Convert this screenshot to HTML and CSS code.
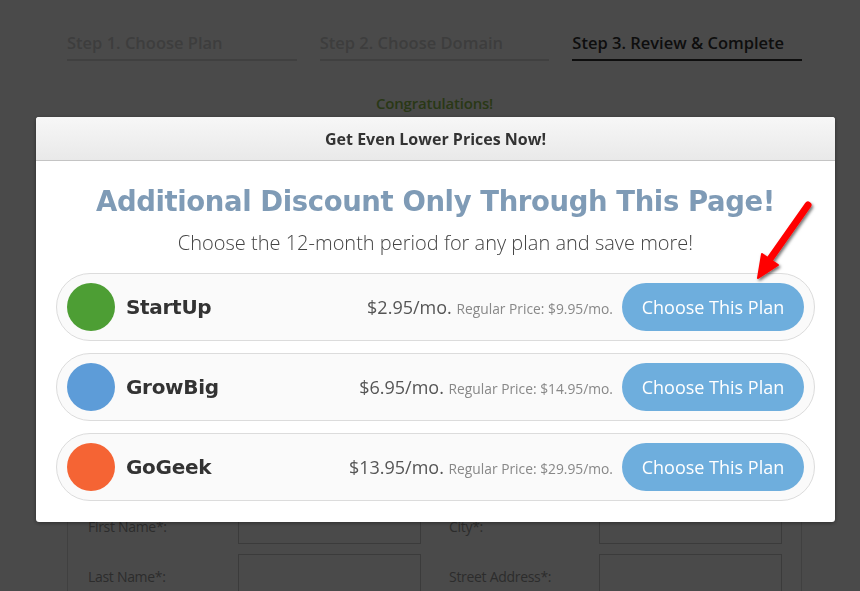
FILE: index.html
```html
<!DOCTYPE html>
<html lang="en">
<head>
    <meta charset="UTF-8">
    <meta name="viewport" content="width=device-width, initial-scale=1.0">
    <title>Review &amp; Complete</title>
    <link rel="stylesheet" href="styles.css">
</head>
<body>
    <div class="page">
        <div class="steps">
            <div class="step">Step 1. Choose Plan</div>
            <div class="step">Step 2. Choose Domain</div>
            <div class="step active">Step 3. Review &amp; Complete</div>
        </div>
        <p class="congrats">Congratulations!</p>
        <div class="account">
            <div class="field">
                <label>First Name*:</label>
                <input type="text">
            </div>
            <div class="field">
                <label>City*:</label>
                <input type="text">
            </div>
            <div class="field">
                <label>Last Name*:</label>
                <input type="text">
            </div>
            <div class="field">
                <label>Street Address*:</label>
                <input type="text">
            </div>
        </div>
    </div>

    <div class="overlay"></div>

    <div class="modal">
        <div class="modal-head">Get Even Lower Prices Now!</div>
        <div class="modal-body">
            <h2>Additional Discount Only Through This Page!</h2>
            <p class="sub">Choose the 12-month period for any plan and save more!</p>

            <div class="plan">
                <span class="dot green"></span>
                <span class="name">StartUp</span>
                <span class="price">$2.95/mo. <small>Regular Price: $9.95/mo.</small></span>
                <button>Choose This Plan</button>
            </div>
            <div class="plan">
                <span class="dot blue"></span>
                <span class="name">GrowBig</span>
                <span class="price">$6.95/mo. <small>Regular Price: $14.95/mo.</small></span>
                <button>Choose This Plan</button>
            </div>
            <div class="plan">
                <span class="dot orange"></span>
                <span class="name">GoGeek</span>
                <span class="price">$13.95/mo. <small>Regular Price: $29.95/mo.</small></span>
                <button>Choose This Plan</button>
            </div>
        </div>
        <!-- red pointer drawn over the first button -->
        <svg class="arrow" width="70" height="90" viewBox="0 0 70 90">
            <defs>
                <filter id="sh" x="-30%" y="-30%" width="160%" height="160%">
                    <feDropShadow dx="1.5" dy="2" stdDeviation="1.5" flood-color="#000" flood-opacity="0.55"/>
                </filter>
            </defs>
            <g filter="url(#sh)" fill="#f00" stroke="#f00">
                <line x1="58" y1="10" x2="20" y2="64" stroke-width="7" stroke-linecap="round"/>
                <polygon points="8,83 12,59 28,70" stroke-width="2" stroke-linejoin="round"/>
            </g>
        </svg>
    </div>
</body>
</html>
```

FILE: styles.css
```css
body {
    margin: 0;
    padding: 0;
    background-color: #fff;
    font-family: "Open Sans", Arial, sans-serif;
    height: 591px;
    overflow: hidden;
}
.page {
    width: 735px;
    margin-left: 67px;
    padding-top: 32px;
}
.steps {
    display: flex;
    gap: 23px;
}
.step {
    flex: 1;
    font-weight: 600;
    font-size: 16.5px;
    line-height: 22px;
    color: #d2d2d2;
    padding-bottom: 5px;
    border-bottom: 2px solid #dcdcdc;
}
.step.active {
    color: #333;
    border-bottom-color: #333;
}
.congrats {
    text-align: center;
    color: #8fc04e;
    font-weight: 600;
    font-size: 15px;
    line-height: 20px;
    margin: 32px 0 0;
    letter-spacing: -0.2px;
}
.account {
    margin-top: 390px;
    border: 1px solid #ddd;
    display: grid;
    grid-template-columns: 1fr 1fr;
    grid-auto-rows: 40px;
    column-gap: 28px;
    row-gap: 10px;
    padding: 0 20px;
    height: 200px;
    align-content: start;
}
.field {
    display: flex;
    align-items: center;
}
.field label {
    width: 150px;
    padding-top: 4px;
    font-size: 14px;
    color: #999;
    letter-spacing: -0.3px;
}
.field input {
    width: 183px;
    height: 40px;
    box-sizing: border-box;
    border: 1px solid #ccc;
    margin: 0;
}
.overlay {
    position: fixed;
    inset: 0;
    background: rgba(0, 0, 0, 0.71);
}
.modal {
    position: fixed;
    left: 36px;
    top: 117px;
    width: 799px;
    background: #fff;
    border-radius: 3px;
    box-shadow: 0 1px 4px rgba(0, 0, 0, 0.4);
}
.modal-head {
    height: 43px;
    line-height: 44px;
    text-align: center;
    font-weight: 700;
    font-size: 16px;
    color: #333;
    background: linear-gradient(#f7f7f7, #e9e9e9);
    border-bottom: 1px solid #c4c4c4;
    border-radius: 3px 3px 0 0;
}
.modal-body {
    padding: 24px 20px 21px;
}
h2 {
    margin: 0;
    text-align: center;
    font-family: "DejaVu Sans", sans-serif;
    font-weight: bold;
    font-size: 27.5px;
    letter-spacing: -0.4px;
    color: #7f9bb6;
}
.sub {
    margin: 12px 0 17px;
    text-align: center;
    font-weight: 300;
    font-size: 20px;
    color: #444;
}
.plan {
    display: flex;
    align-items: center;
    height: 66px;
    border: 1px solid #dcdcdc;
    border-radius: 34px;
    background: #fafafa;
    padding: 0 10px;
    margin-bottom: 12px;
}
.plan:last-child {
    margin-bottom: 0;
}
.dot {
    width: 48px;
    height: 48px;
    border-radius: 50%;
    margin-right: 11px;
}
.green { background: #4d9e34; }
.blue { background: #5d9cd8; }
.orange { background: #f56434; }
.name {
    font-family: "DejaVu Sans", sans-serif;
    font-weight: bold;
    font-size: 20px;
    color: #333;
    letter-spacing: -0.3px;
}
.price {
    margin-left: auto;
    margin-right: 9px;
    font-size: 18px;
    color: #555;
}
.price small {
    font-size: 13.8px;
    color: #888;
}
button {
    width: 182px;
    height: 48px;
    border: none;
    border-radius: 24px;
    background: #6eaedd;
    color: #fff;
    font-family: "Open Sans", Arial, sans-serif;
    font-size: 18px;
    cursor: pointer;
}
.arrow {
    position: absolute;
    left: 714px;
    top: 78px;
}
```
